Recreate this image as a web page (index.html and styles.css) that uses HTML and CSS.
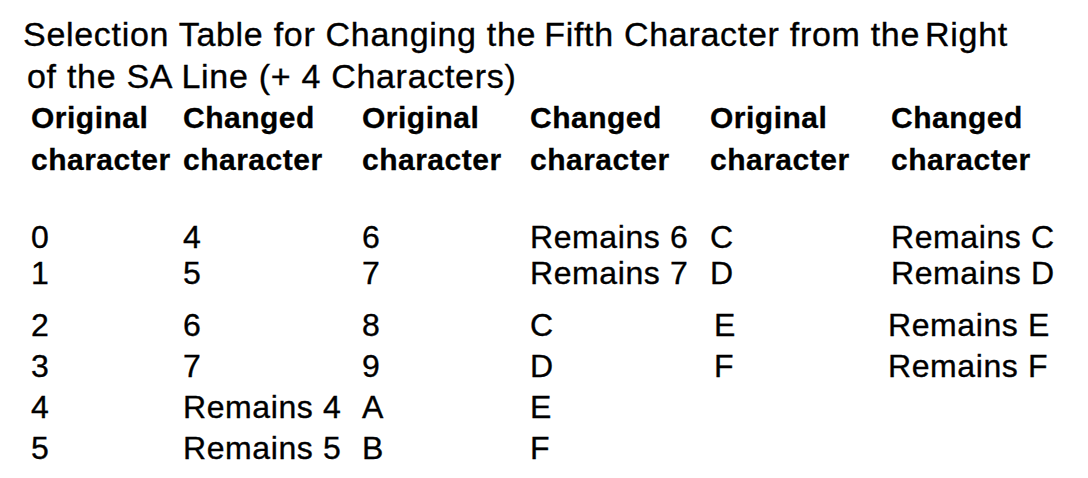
FILE: index.html
```html
<!DOCTYPE html>
<html lang="en">
<head>
<meta charset="utf-8">
<title>Selection Table</title>
<link rel="stylesheet" href="styles.css">
</head>
<body>
<div class="page">
  <div class="title">
    <div class="title-line first"><span>Selection Table for Changing the</span><span class="gap-wide">Fifth Character from the</span><span class="gap-tight">Right</span></div>
    <div class="title-line second">of the SA Line (+ 4 Characters)</div>
  </div>

  <div class="row head">
    <div>Original<br>character</div>
    <div>Changed<br>character</div>
    <div>Original<br>character</div>
    <div>Changed<br>character</div>
    <div>Original<br>character</div>
    <div>Changed<br>character</div>
  </div>

  <div class="data">
    <div class="row r0">
      <div>0</div><div>4</div><div>6</div><div>Remains 6</div><div>C</div><div>Remains C</div>
    </div>
    <div class="row r1">
      <div>1</div><div>5</div><div>7</div><div>Remains 7</div><div>D</div><div>Remains D</div>
    </div>
    <div class="row r2">
      <div>2</div><div>6</div><div>8</div><div>C</div><div class="nudge-r">E</div><div class="nudge-l">Remains E</div>
    </div>
    <div class="row r3">
      <div>3</div><div>7</div><div>9</div><div>D</div><div class="nudge-r">F</div><div class="nudge-l">Remains F</div>
    </div>
    <div class="row r4">
      <div>4</div><div>Remains 4</div><div>A</div><div>E</div><div></div><div></div>
    </div>
    <div class="row r5">
      <div>5</div><div>Remains 5</div><div>B</div><div>F</div><div></div><div></div>
    </div>
  </div>
</div>
</body>
</html>
```

FILE: styles.css
```css
html, body {
  margin: 0;
  padding: 0;
  background: #ffffff;
}

.page {
  width: 1088px;
  height: 478px;
  overflow: hidden;
  color: #000000;
  font-family: "Liberation Sans", Arial, Helvetica, sans-serif;
}

.title {
  padding-top: 13px;
  font-size: 34px;
  line-height: 42px;
  letter-spacing: 0.7px;
  white-space: nowrap;
  -webkit-text-stroke: 0.35px #000000;
}

.title-line.first {
  padding-left: 23px;
}

.title-line.second {
  padding-left: 27px;
}

.gap-wide {
  margin-left: 8px;
}

.gap-tight {
  margin-left: 5px;
}

.row {
  display: grid;
  grid-template-columns: 152px 179px 168px 180px 181px 1fr;
  padding-left: 31px;
  white-space: nowrap;
}

.head {
  font-size: 30px;
  font-weight: bold;
  line-height: 42px;
  letter-spacing: 0.5px;
  -webkit-text-stroke: 0.3px #000000;
}

.data {
  margin-top: 36px;
  font-size: 32px;
  line-height: 41px;
  letter-spacing: 0.6px;
  -webkit-text-stroke: 0.35px #000000;
}

.r1 {
  margin-top: -5px;
}

.r2 {
  margin-top: 11px;
}

.nudge-r {
  margin-left: 4px;
}

.nudge-l {
  margin-left: -3px;
}
```
